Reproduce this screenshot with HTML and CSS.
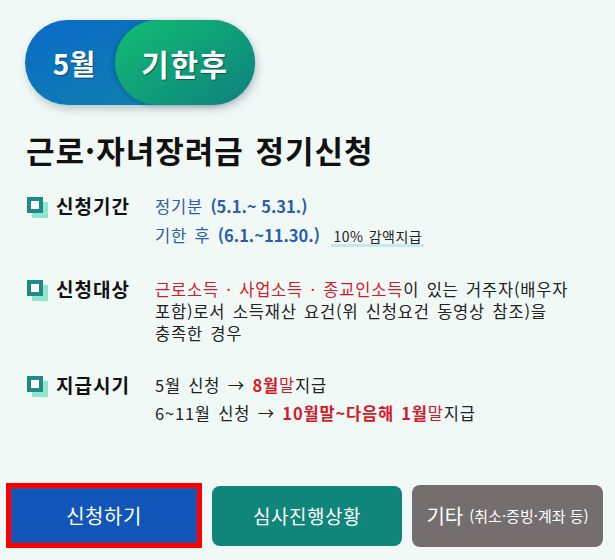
FILE: index.html
```html
<!DOCTYPE html>
<html lang="ko">
<head>
<meta charset="utf-8">
<title>근로·자녀장려금 정기신청</title>
<link rel="stylesheet" href="styles.css">
</head>
<body>
<div class="page">
  <div class="top">
    <div class="badge">
      <span class="badge-month">5월</span>
      <span class="badge-after">기한후</span>
    </div>
    <h1 class="title">근로·자녀장려금 정기신청</h1>

    <div class="item">
      <div class="item-head"><span class="icon"></span><span class="label">신청기간</span></div>
      <div class="item-body">
        <div class="line blue">정기분 <b class="num">(5.1.~ 5.31.)</b></div>
        <div class="line blue gap7">기한 후 <b class="num">(6.1.~11.30.)</b> <span class="note">10% 감액지급</span></div>
      </div>
    </div>

    <div class="item sec2">
      <div class="item-head"><span class="icon"></span><span class="label">신청대상</span></div>
      <div class="item-body">
        <p class="para"><span class="red">근로소득 · 사업소득 · 종교인소득</span>이 있는 거주자(배우자 포함)로서 소득재산 요건(위 신청요건 동영상 참조)을 충족한 경우</p>
      </div>
    </div>

    <div class="item sec3">
      <div class="item-head"><span class="icon"></span><span class="label">지급시기</span></div>
      <div class="item-body">
        <div class="line">5월 신청 → <b class="red">8월</b><span class="red">말</span>지급</div>
        <div class="line gap6">6~11월 신청 → <b class="red">10월말~다음해 1월</b><span class="red">말</span>지급</div>
      </div>
    </div>
  </div>

  <div class="actions">
    <a class="btn btn-apply">신청하기</a>
    <a class="btn btn-status">심사진행상황</a>
    <a class="btn btn-etc">기타<small>(취소·증빙·계좌 등)</small></a>
  </div>
</div>
</body>
</html>
```
FILE: styles.css
```css
* { box-sizing: border-box; }
html, body {
  margin: 0;
  padding: 0;
  background: #f1f9f7;
}
body {
  font-family: "Noto Sans CJK KR", "Noto Sans", sans-serif;
  color: #1a1a1a;
  width: 615px;
  height: 560px;
  overflow: hidden;
}
.top {
  padding: 20px 0 0 25px;
}
.badge {
  display: flex;
  width: 230px;
  height: 85px;
  border-radius: 43px;
  background: linear-gradient(160deg, #0a6ac8 0%, #1186aa 100%);
  box-shadow: 2px 4px 8px rgba(40, 70, 80, 0.28);
}
.badge-month {
  width: 90px;
  padding-left: 8px;
  display: flex;
  align-items: center;
  justify-content: center;
  color: #fff;
  font-size: 28px;
  font-weight: 700;
  text-shadow: 1px 1px 1px rgba(0, 40, 80, 0.6);
}
.badge-after {
  width: 140px;
  border-radius: 43px;
  display: flex;
  align-items: center;
  justify-content: center;
  background: linear-gradient(145deg, #12bd72 0%, #0f9c7a 55%, #0e7e7e 100%);
  box-shadow: -2px 1px 4px rgba(0, 50, 60, 0.25);
  color: #fff;
  font-size: 30px;
  font-weight: 700;
  letter-spacing: 1.5px;
  text-shadow: 1px 1px 1px rgba(0, 50, 40, 0.6);
}
.title {
  margin: 27px 0 0 1px;
  font-size: 31px;
  line-height: 36px;
  font-weight: 700;
  color: #111;
  letter-spacing: 1px;
  word-spacing: 2px;
}
.item {
  display: flex;
  margin-top: 27px;
}
.item.sec2 { margin-top: 31px; }
.item.sec3 { margin-top: 30px; }
.item-head {
  width: 130px;
  flex: none;
  display: flex;
  align-items: center;
  height: 22px;
  padding-left: 2px;
}
.icon {
  width: 16px;
  height: 16px;
  border: 4px solid #1e8a88;
  background: #fff;
  box-shadow: 5px 5px 0 0 #8fe6cc;
  flex: none;
  margin-top: -2px;
}
.label {
  margin-left: 13px;
  font-size: 19px;
  font-weight: 700;
  color: #111;
  line-height: 22px;
  letter-spacing: 1px;
}
.item-body {
  font-size: 16.5px;
  line-height: 22px;
  color: #222;
  letter-spacing: 0.8px;
  word-spacing: 2px;
}
.line { white-space: nowrap; }
.gap7 { margin-top: 7px; }
.gap6 { margin-top: 6px; }
.blue { color: #2c5cab; }
.num { font-weight: 700; letter-spacing: 0; word-spacing: 0; }
.red { color: #d3192a; }
b.red { font-weight: 700; }
.note {
  margin-left: 4px;
  font-size: 14px;
  color: #222;
  letter-spacing: 0.5px;
  word-spacing: 1px;
  padding: 0 2px 1px;
  background: linear-gradient(#c6e6f1, #c6e6f1) left bottom / 100% 3px no-repeat;
}
.para {
  margin: 0;
  width: 436px;
  word-break: keep-all;
}
.actions {
  display: flex;
  align-items: center;
  gap: 10px;
  margin-top: 59px;
  padding-left: 6px;
}
.btn {
  display: flex;
  align-items: center;
  justify-content: center;
  color: #fff;
  font-size: 19px;
  letter-spacing: 0.5px;
  text-decoration: none;
}
.btn-apply {
  width: 196px;
  height: 65px;
  border: 5px solid #ff0000;
  background: #1156b8;
  box-shadow: inset 0 0 0 1px #3d4f9e;
  font-size: 20px;
}
.btn-status {
  width: 190px;
  height: 60px;
  border-radius: 8px;
  background: #10857a;
}
.btn-etc {
  width: 191px;
  height: 62px;
  border-radius: 8px;
  background: #746f6e;
  font-size: 20px;
  letter-spacing: 0;
}
.btn-etc small {
  font-size: 15px;
  margin-left: 6px;
}
```
